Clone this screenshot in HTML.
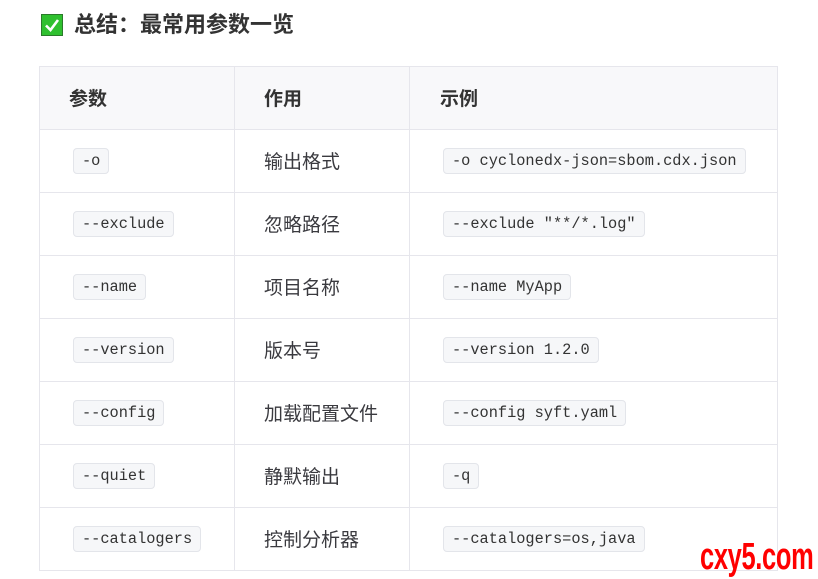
<!DOCTYPE html>
<html><head><meta charset="utf-8"><style>
body{margin:0;width:818px;height:579px;background:#fff;font-family:"Liberation Sans","Noto Sans CJK SC",sans-serif;color:#3a3a3f;position:relative;overflow:hidden}
h2{position:absolute;left:41px;top:10px;margin:0;font-size:22px;font-weight:bold;color:#333;display:flex;align-items:center;line-height:30px}
.chk{width:22px;height:22px;background:#2fc02f;border:1px solid #2a7a2a;box-sizing:border-box;margin-right:11px;display:inline-block;position:relative}
table{position:absolute;left:39px;top:66px;border-collapse:collapse;width:739px}
td,th{border:1px solid #e6e6ec;height:63px;padding:0 0 2px 33px;text-align:left;font-size:19px;box-sizing:border-box}
th{background:#f8f8fa;font-weight:bold;color:#333;padding-left:29px}
tr td:nth-child(2),tr th:nth-child(2){padding-left:29px}
tr th:nth-child(3){padding-left:30px}
code{font-family:"Liberation Mono",monospace;font-size:15.3px;background:#f6f7f9;border:1px solid #e3e5ea;border-radius:4px;padding:3px 8px;color:#333}
.wm{position:absolute;left:700px;top:536px;font-family:"Liberation Sans",sans-serif;font-weight:bold;font-size:38px;color:#f00;transform:scaleX(0.67);transform-origin:left;letter-spacing:-0.5px}
</style></head><body>
<h2><span class="chk"><svg width="20" height="20" viewBox="0 0 20 20" style="position:absolute;left:0;top:0"><path d="M4 10.5 L8.5 15 L16 5" stroke="#fff" stroke-width="2.6" fill="none"/></svg></span>总结：最常用参数一览</h2>
<table>
<colgroup><col style="width:195px"><col style="width:175px"><col></colgroup>
<tr><th>参数</th><th>作用</th><th>示例</th></tr>
<tr><td><code>-o</code></td><td>输出格式</td><td><code>-o cyclonedx-json=sbom.cdx.json</code></td></tr>
<tr><td><code>--exclude</code></td><td>忽略路径</td><td><code>--exclude "**/*.log"</code></td></tr>
<tr><td><code>--name</code></td><td>项目名称</td><td><code>--name MyApp</code></td></tr>
<tr><td><code>--version</code></td><td>版本号</td><td><code>--version 1.2.0</code></td></tr>
<tr><td><code>--config</code></td><td>加载配置文件</td><td><code>--config syft.yaml</code></td></tr>
<tr><td><code>--quiet</code></td><td>静默输出</td><td><code>-q</code></td></tr>
<tr><td><code>--catalogers</code></td><td>控制分析器</td><td><code>--catalogers=os,java</code></td></tr>
</table>
<div class="wm">cxy5.com</div>
</body></html>
